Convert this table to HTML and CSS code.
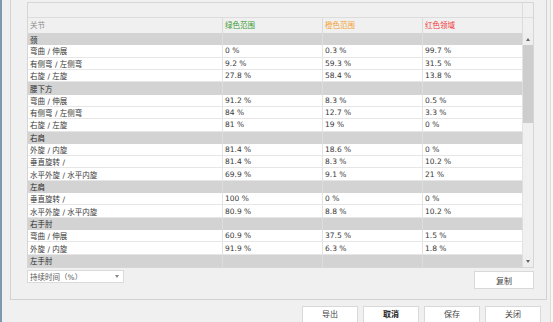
FILE: index.html
```html
<!DOCTYPE html>
<html lang="zh">
<head>
<meta charset="utf-8">
<title>关节</title>
<link rel="stylesheet" href="styles.css">
</head>
<body>
<div class="window">
  <div class="panel">
    <div class="grid">
      <div class="head-top"><div class="ht-main"></div><div class="ht-scroll"></div></div>
      <div class="head">
        <div class="hc muted">关节</div>
        <div class="hc green">绿色范围</div>
        <div class="hc orange">橙色范围</div>
        <div class="hc red">红色领域</div>
        <div class="hc sc"></div>
      </div>
      <div class="body">
        <div class="rows">
          <div class="row grp"><div class="cell">颈</div><div class="cell"></div><div class="cell"></div><div class="cell"></div></div>
          <div class="row"><div class="cell">弯曲 / 伸展</div><div class="cell">0 %</div><div class="cell">0.3 %</div><div class="cell">99.7 %</div></div>
          <div class="row"><div class="cell">有侧弯 / 左侧弯</div><div class="cell">9.2 %</div><div class="cell">59.3 %</div><div class="cell">31.5 %</div></div>
          <div class="row"><div class="cell">右旋 / 左旋</div><div class="cell">27.8 %</div><div class="cell">58.4 %</div><div class="cell">13.8 %</div></div>
          <div class="row grp"><div class="cell">腰下方</div><div class="cell"></div><div class="cell"></div><div class="cell"></div></div>
          <div class="row"><div class="cell">弯曲 / 伸展</div><div class="cell">91.2 %</div><div class="cell">8.3 %</div><div class="cell">0.5 %</div></div>
          <div class="row"><div class="cell">有侧弯 / 左侧弯</div><div class="cell">84 %</div><div class="cell">12.7 %</div><div class="cell">3.3 %</div></div>
          <div class="row"><div class="cell">右旋 / 左旋</div><div class="cell">81 %</div><div class="cell">19 %</div><div class="cell">0 %</div></div>
          <div class="row grp"><div class="cell">右肩</div><div class="cell"></div><div class="cell"></div><div class="cell"></div></div>
          <div class="row"><div class="cell">外旋 / 内旋</div><div class="cell">81.4 %</div><div class="cell">18.6 %</div><div class="cell">0 %</div></div>
          <div class="row"><div class="cell">垂直旋转 /</div><div class="cell">81.4 %</div><div class="cell">8.3 %</div><div class="cell">10.2 %</div></div>
          <div class="row"><div class="cell">水平外旋 / 水平内旋</div><div class="cell">69.9 %</div><div class="cell">9.1 %</div><div class="cell">21 %</div></div>
          <div class="row grp"><div class="cell">左肩</div><div class="cell"></div><div class="cell"></div><div class="cell"></div></div>
          <div class="row"><div class="cell">垂直旋转 /</div><div class="cell">100 %</div><div class="cell">0 %</div><div class="cell">0 %</div></div>
          <div class="row"><div class="cell">水平外旋 / 水平内旋</div><div class="cell">80.9 %</div><div class="cell">8.8 %</div><div class="cell">10.2 %</div></div>
          <div class="row grp"><div class="cell">右手肘</div><div class="cell"></div><div class="cell"></div><div class="cell"></div></div>
          <div class="row"><div class="cell">弯曲 / 伸展</div><div class="cell">60.9 %</div><div class="cell">37.5 %</div><div class="cell">1.5 %</div></div>
          <div class="row"><div class="cell">外旋 / 内旋</div><div class="cell">91.9 %</div><div class="cell">6.3 %</div><div class="cell">1.8 %</div></div>
          <div class="row grp"><div class="cell">左手肘</div><div class="cell"></div><div class="cell"></div><div class="cell"></div></div>
        </div>
        <div class="scrollbar">
          <div class="sb-btn"><span class="tri up"></span></div>
          <div class="sb-thumb"></div>
          <div class="sb-track"></div>
          <div class="sb-btn"><span class="tri down"></span></div>
        </div>
      </div>
    </div>
    <div class="below">
      <div class="combo"><span>持续时间（%）</span><span class="tri down small"></span></div>
      <button class="btn copy">复制</button>
    </div>
  </div>
  <div class="actions">
    <button class="btn act">导出</button>
    <button class="btn act default">取消</button>
    <button class="btn act">保存</button>
    <button class="btn act">关闭</button>
  </div>
</div>
</body>
</html>
```
FILE: styles.css
```css
* { box-sizing: border-box; margin: 0; padding: 0; }
html, body { width: 553px; height: 322px; overflow: hidden; }
body {
  background: #f8f8f8;
  font-family: "DejaVu Sans", "Noto Sans CJK SC", sans-serif;
  font-size: 7.5px;
  color: #383838;
}
.window {
  width: 551px;
  height: 322px;
  background: #f0f0f0;
  border-left: 2px solid #7f9ab0;
  border-right: 1px solid #dcdcdc;
  display: flex;
  flex-direction: column;
}
.panel {
  margin: 0 3px 0 8px;
  border: 1px solid #d2d2d2;
  border-top: none;
  padding: 2px 12px 10px 16px;
}
.grid {
  width: 507px;
  border: 1px solid #d6d6d6;
  background: #f0f0f0;
}
.head-top {
  display: flex;
  height: 15px;
  border-bottom: 1px solid #dcdcdc;
}
.ht-main { width: 495px; border-right: 1px solid #dcdcdc; }
.ht-scroll { width: 10px; }
.head {
  display: grid;
  grid-template-columns: 195px 100px 100px 100px 10px;
  height: 15px;
}
.hc {
  border-right: 1px solid #dcdcdc;
  padding-left: 2px;
  line-height: 15px;
  white-space: nowrap;
}
.hc.sc { border-right: none; }
.muted { color: #8c8c8c; }
.green { color: #3f9c36; }
.orange { color: #f2a233; }
.red { color: #f23a3a; }
.body { display: flex; height: 234px; }
.rows {
  width: 495px;
  display: grid;
  grid-template-rows: repeat(19, 1fr);
}
.row {
  display: grid;
  grid-template-columns: 195px 100px 100px 100px;
  background: #fff;
  border-bottom: 1px solid #e6e6e6;
  min-height: 0;
}
.cell {
  border-right: 1px solid #e3e3e3;
  padding-left: 2px;
  white-space: nowrap;
  display: flex;
  align-items: center;
  overflow: hidden;
}
.row.grp { background: #d3d3d3; border-bottom: none; color: #2a2a2a; }
.row.grp .cell { border-right-color: #dddddd; }
.scrollbar {
  width: 10px;
  display: flex;
  flex-direction: column;
  background: #f0f0f0;
}
.sb-btn {
  height: 12px;
  background: #eeeeee;
  display: flex;
  align-items: center;
  justify-content: center;
}
.sb-thumb { height: 78px; background: #cdcdcd; }
.sb-track { flex: 1; }
.tri { width: 0; height: 0; border-left: 2.5px solid transparent; border-right: 2.5px solid transparent; }
.tri.up { border-bottom: 3px solid #666; }
.tri.down { border-top: 3px solid #666; }
.tri.small { border-top-color: #888; }
.below {
  width: 507px;
  display: flex;
  justify-content: space-between;
  align-items: flex-start;
}
.combo {
  margin-top: 2px;
  width: 97px;
  height: 13px;
  background: #fff;
  border: 1px solid #dadada;
  display: flex;
  align-items: center;
  justify-content: space-between;
  padding: 0 4px 0 2px;
  color: #555;
}
.btn {
  font-family: "DejaVu Sans", "Noto Sans CJK SC", sans-serif;
  font-size: 8px;
  color: #444;
  background: #fff;
  border: 1px solid #d9d9d9;
}
.copy { margin-top: 3px; width: 60px; height: 18px; }
.actions {
  margin-top: 6px;
  display: flex;
  justify-content: flex-end;
  gap: 5px;
  padding-right: 9px;
}
.act { width: 56px; height: 22px; line-height: 16px; padding-bottom: 4px; }
.act.default { font-weight: bold; color: #222; }
```
